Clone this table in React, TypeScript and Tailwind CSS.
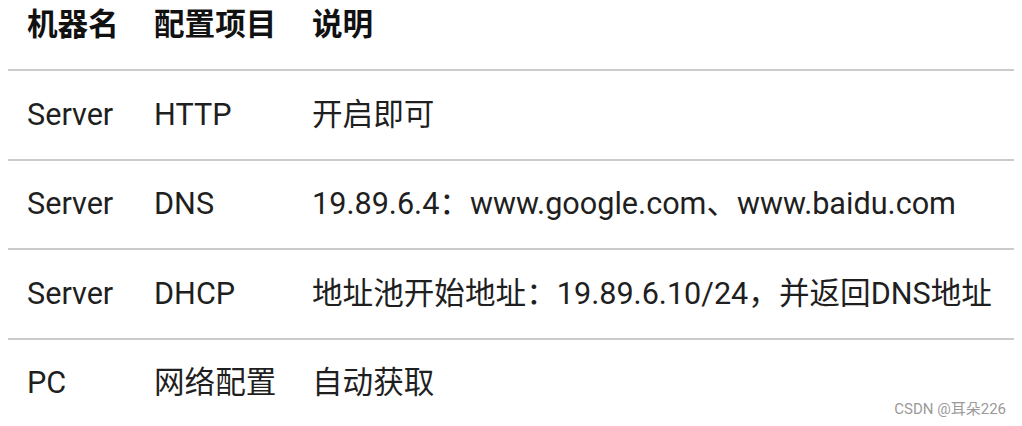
import React from "react";

const rows = [
  ["Server", "HTTP", "开启即可"],
  ["Server", "DNS", "19.89.6.4：www.google.com、www.baidu.com"],
  ["Server", "DHCP", "地址池开始地址：19.89.6.10/24，并返回DNS地址"],
  ["PC", "网络配置", "自动获取"],
];

export default function App() {
  return (
    <div
      className="relative w-[1022px] h-[426px] bg-white text-[#1f1f1f] overflow-hidden"
      style={{ fontFamily: 'Roboto, "Noto Sans CJK SC", sans-serif' }}
    >
      <div className="px-2">
        <div className="grid grid-cols-[127px_158px_1fr] h-[69px] text-[30.6px] font-bold leading-[40px] pt-[5px] text-[#111] whitespace-nowrap">
          <div className="px-[19px]">机器名</div>
          <div className="px-[19px]">配置项目</div>
          <div className="px-[19px]">说明</div>
        </div>
        {rows.map((r, i) => (
          <div
            key={i}
            className="grid grid-cols-[127px_158px_1fr] h-[89.5px] border-t-2 border-[#cbcbcb] items-center text-[30.6px] leading-[40px] whitespace-nowrap"
          >
            <div className="px-[19px]">{r[0]}</div>
            <div className="px-[19px]">{r[1]}</div>
            <div className="px-[19px]">{r[2]}</div>
          </div>
        ))}
      </div>
      <div className="absolute right-[16px] top-[399px] text-[15px] leading-[20px] text-[#9a9a9a]">
        CSDN @耳朵226
      </div>
    </div>
  );
}
